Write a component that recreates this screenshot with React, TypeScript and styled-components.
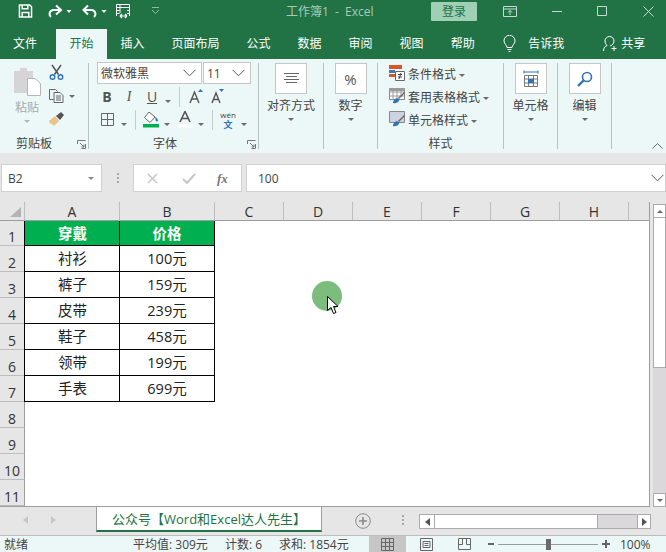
import React from "react";
import styled, { createGlobalStyle } from "styled-components";

const Global = createGlobalStyle`
  html, body { margin: 0; padding: 0; background: #e6e6e6; overflow: hidden; }
  body { font-family: "Open Sans", "Noto Sans CJK SC", sans-serif; }
  svg { display: block; flex: none; }
`;

const Window = styled.div`
  width: 666px;
  height: 552px;
  display: flex;
  flex-direction: column;
  position: relative;
  overflow: hidden;
  color: #444;
`;

/* title bar */
const TitleBar = styled.div`
  height: 29px;
  box-sizing: border-box;
  padding-bottom: 7px;
  background: #217346;
  display: flex;
  align-items: center;
  flex: none;
`;
const QuickIcon = styled.span<{ $ml: number }>`
  margin-left: ${(p) => p.$ml}px;
  display: block;
`;
const DocTitle = styled.div`
  margin-left: 126px;
  width: 145px;
  font-size: 12px;
  word-spacing: 3px;
  color: #a5cbb6;
  white-space: nowrap;
`;
const Login = styled.div`
  width: 46px;
  height: 19px;
  background: #9fcfb4;
  color: #217346;
  border-radius: 1px;
  font-size: 12px;
  line-height: 19px;
  text-align: center;
`;

/* tabs */
const TabBar = styled.div`
  height: 30px;
  background: #217346;
  display: flex;
  flex: none;
`;
const Tab = styled.div<{ $active?: boolean }>`
  padding: 0 13.5px;
  font-size: 12px;
  line-height: 29px;
  color: ${(p) => (p.$active ? "#217346" : "#fff")};
  background: ${(p) => (p.$active ? "#ecf8f7" : "transparent")};
  white-space: nowrap;
  &:first-child { padding-left: 13px; padding-right: 19px; }
`;
const TabTail = styled.div`
  margin-left: 15px;
  display: flex;
  align-items: flex-start;
  padding-top: 6px;
  color: #fff;
  font-size: 12px;
  line-height: 17px;
  white-space: nowrap;
`;
const TailLabel = styled.span<{ $ml: number }>`
  margin-left: ${(p) => p.$ml}px;
`;

/* ribbon */
const Ribbon = styled.div`
  height: 94px;
  background: #ecf8f7;
  display: flex;
  padding-top: 4px;
  box-sizing: border-box;
  flex: none;
  position: relative;
`;
const Group = styled.div<{ $w: number }>`
  width: ${(p) => p.$w}px;
  height: 86px;
  border-right: 1px solid #b8c2c2;
  flex: none;
  display: flex;
  flex-direction: column;
  position: relative;
  box-sizing: content-box;
`;
const GroupBody = styled.div`
  height: 73px;
  flex: none;
`;
const GroupLabel = styled.div<{ $pr?: number }>`
  font-size: 12px;
  line-height: 16px;
  text-align: center;
  padding-right: ${(p) => p.$pr ?? 0}px;
  color: #444;
  white-space: nowrap;
`;
const Launcher = styled.span`
  position: absolute;
  right: 2px;
  bottom: 0;
`;
const Caret = styled.span<{ $c?: string; $up?: boolean }>`
  display: inline-block;
  width: 0;
  height: 0;
  flex: none;
  border-left: 3px solid transparent;
  border-right: 3px solid transparent;
  border-top: ${(p) => (p.$up ? "0" : `3px solid ${p.$c ?? "#6a6a6a"}`)};
  border-bottom: ${(p) => (p.$up ? `3px solid ${p.$c ?? "#6a6a6a"}` : "0")};
`;
const BigButton = styled.div`
  display: flex;
  flex-direction: column;
  align-items: center;
  font-size: 12px;
  line-height: 16px;
  color: #444;
  white-space: nowrap;
`;
const BigBox = styled.div`
  width: 30px;
  height: 29px;
  background: #fff;
  border: 1px solid #c6c6c6;
  display: flex;
  align-items: center;
  justify-content: center;
  margin-bottom: 4px;
  font-size: 15px;
  color: #555;
`;
const BigCaret = styled.div`
  margin-top: 1px;
  height: 8px;
  display: flex;
  align-items: center;
`;

const ClipBody = styled.div`
  display: flex;
  height: 73px;
  padding-left: 13px;
  flex: none;
`;
const PasteCol = styled.div`
  width: 28px;
  display: flex;
  flex-direction: column;
  align-items: center;
  padding-top: 4px;
  font-size: 12px;
  line-height: 16px;
  color: #a8a8a8;
  white-space: nowrap;
`;
const PasteLabel = styled.span`
  margin-top: 4px;
  width: 24px;
`;
const ClipTools = styled.div`
  margin-left: 8px;
  padding-top: 1px;
  display: flex;
  flex-direction: column;
  gap: 9px;
`;
const ClipTool = styled.div`
  display: flex;
  align-items: center;
  gap: 5px;
`;

const FontBody = styled.div`
  height: 74px;
  margin-top: -1px;
  padding-left: 8px;
  display: flex;
  flex-direction: column;
  flex: none;
`;
const FontPickers = styled.div`
  display: flex;
  gap: 1px;
  margin-bottom: 1px;
`;
const Picker = styled.div<{ $w: number }>`
  width: ${(p) => p.$w}px;
  height: 22px;
  box-sizing: border-box;
  background: #fff;
  border: 1px solid #c6c6c6;
  display: flex;
  align-items: center;
  justify-content: space-between;
  padding: 0 5px 0 3px;
  font-size: 12px;
  color: #444;
  white-space: nowrap;
`;
const ToolRow = styled.div`
  height: 23px;
  display: flex;
  align-items: center;
`;
const ToolGlyph = styled.span<{ $w: number; $serif?: boolean; $italic?: boolean; $bold?: boolean; $under?: boolean }>`
  width: ${(p) => p.$w}px;
  text-align: center;
  font-size: 14px;
  font-family: ${(p) => (p.$serif ? '"Liberation Serif", serif' : '"Open Sans", sans-serif')};
  font-style: ${(p) => (p.$italic ? "italic" : "normal")};
  font-weight: ${(p) => (p.$bold ? 700 : 400)};
  text-decoration: ${(p) => (p.$under ? "underline" : "none")};
  color: #555;
  flex: none;
`;
const RowSep = styled.span<{ $ml: number; $mr: number }>`
  width: 1px;
  height: 20px;
  background: #c4cccc;
  margin: 0 ${(p) => p.$mr}px 0 ${(p) => p.$ml}px;
  flex: none;
`;
const Slot = styled.span<{ $ml: number }>`
  margin-left: ${(p) => p.$ml}px;
  display: block;
  flex: none;
`;
const Wen = styled.span`
  width: 18px;
  display: flex;
  flex-direction: column;
  align-items: center;
  color: #444;
  flex: none;
  margin-left: 6px;
  span { font-size: 8px; line-height: 10px; }
  b { color: #2f74b5; font-weight: 700; font-size: 9px; line-height: 10px; }
`;

const StyleBody = styled.div`
  height: 73px;
  padding: 2px 0 0 11px;
  box-sizing: border-box;
  display: flex;
  flex-direction: column;
  gap: 5px;
  flex: none;
`;
const StyleRow = styled.div`
  height: 16px;
  padding-top: 2px;
  display: flex;
  align-items: center;
  font-size: 12px;
  line-height: 16px;
  color: #444;
  white-space: nowrap;
  svg { margin: -4px 3px 0 0; }
  ${Caret} { margin-left: 3px; border-top-color: #6a6a6a; }
`;
const Collapse = styled.span`
  position: absolute;
  right: 3px;
  bottom: 4px;
`;

/* formula bar */
const FormulaBar = styled.div`
  height: 28px;
  margin-top: 11px;
  display: flex;
  flex: none;
  padding-left: 1px;
`;
const Field = styled.div<{ $w: number }>`
  width: ${(p) => p.$w}px;
  height: 28px;
  box-sizing: border-box;
  background: #fff;
  border: 1px solid #d0d0d0;
  display: flex;
  align-items: center;
  font-size: 12px;
  color: #444;
  flex: none;
`;
const FieldText = styled.span<{ $ml: number; $w: number }>`
  margin-left: ${(p) => p.$ml}px;
  width: ${(p) => p.$w}px;
  flex: none;
`;
const FxMark = styled.span`
  font-family: "Liberation Serif", serif;
  font-style: italic;
  font-weight: 700;
  font-size: 13px;
  color: #777;
`;
const Dots = styled.span`
  width: 31px;
  display: flex;
  flex-direction: column;
  align-items: center;
  justify-content: center;
  gap: 2px;
  flex: none;
  i { width: 2px; height: 2px; background: #a8a8a8; display: block; }
`;

/* sheet */
const SheetArea = styled.div`
  margin-top: 10px;
  height: 305px;
  display: flex;
  flex: none;
`;
const SheetMain = styled.div`
  width: 650px;
  display: grid;
  grid-template-columns: 25px 95px 95px repeat(6, 69px) 20px;
  grid-template-rows: 19px 25px repeat(10, 26px);
  border-right: 1px solid #9d9d9d;
  border-bottom: 1px solid #9d9d9d;
  box-sizing: border-box;
  height: 305px;
  background: #fff;
`;
const Corner = styled.div`
  background: #e6e6e6;
  border-right: 1px solid #bdbdbd;
  border-bottom: 1px solid #9d9d9d;
  box-sizing: border-box;
  padding: 5px 0 0 10px;
`;
const ColHead = styled.div<{ $end?: boolean }>`
  background: #e6e6e6;
  border-right: ${(p) => (p.$end ? "0" : "1px solid #bdbdbd")};
  border-bottom: 1px solid #9d9d9d;
  box-sizing: border-box;
  font-size: 14px;
  line-height: 20px;
  text-align: center;
  color: #333;
`;
const RowHead = styled.div<{ $row: number }>`
  grid-column: 1;
  grid-row: ${(p) => p.$row};
  background: #e6e6e6;
  border-right: 1px solid #9d9d9d;
  border-bottom: 1px solid #bdbdbd;
  box-sizing: border-box;
  font-size: 14px;
  line-height: 16px;
  display: flex;
  align-items: flex-end;
  justify-content: center;
  color: #333;
`;
const Cell = styled.div<{ $head?: boolean; $col: number; $row: number }>`
  grid-column: ${(p) => p.$col};
  grid-row: ${(p) => p.$row};
  box-sizing: border-box;
  margin-left: -1px;
  border-style: solid;
  border-color: #000;
  border-width: 0 ${(p) => (p.$col === 3 ? "1px" : "0")} 1px 1px;
  background: ${(p) => (p.$head ? "#00b050" : "#fff")};
  color: ${(p) => (p.$head ? "#fff" : "#222")};
  font-size: 14.500px;
  font-weight: ${(p) => (p.$head ? 700 : 400)};
  line-height: 25px;
  text-align: center;
  white-space: nowrap;
  position: relative;
`;
const Pointer = styled.div`
  position: absolute;
  left: 312px;
  top: 281px;
  width: 30px;
  height: 30px;
  border-radius: 50%;
  background: #7cbc7c;
`;
const Arrow = styled.span`
  position: absolute;
  left: 327px;
  top: 296px;
`;

const VScroll = styled.div`
  width: 13px;
  margin-left: 3px;
  height: 305px;
  display: flex;
  flex-direction: column;
  padding-top: 2px;
  box-sizing: border-box;
  flex: none;
`;
const ScrollBtn = styled.div<{ $w?: number; $h?: number }>`
  width: ${(p) => p.$w ?? 13}px;
  height: ${(p) => p.$h ?? 14}px;
  box-sizing: border-box;
  background: #fff;
  border: 1px solid #ababab;
  display: flex;
  align-items: center;
  justify-content: center;
  flex: none;
`;
const VThumb = styled.div`
  height: 150px;
  box-sizing: border-box;
  background: #fff;
  border: 1px solid #ababab;
  border-top: 0;
  flex: none;
`;
const VTrack = styled.div`
  flex: 1;
  background: #dad8da;
`;

/* sheet tabs */
const SheetBar = styled.div`
  height: 28px;
  display: flex;
  flex: none;
  background: #e6e6e6;
  border-bottom: 1px solid #bdbdbd;
  box-sizing: content-box;
`;
const NavArrows = styled.div`
  width: 96px;
  display: flex;
  align-items: center;
  gap: 23px;
  padding: 0 0 2px 23px;
  box-sizing: border-box;
  flex: none;
`;
const SheetTab = styled.div`
  width: 226px;
  height: 25px;
  box-sizing: border-box;
  background: #fff;
  border-left: 1px solid #9d9d9d;
  border-right: 1px solid #9d9d9d;
  border-bottom: 2px solid #217346;
  color: #217346;
  font-size: 13px;
  line-height: 24px;
  text-align: center;
  white-space: nowrap;
  flex: none;
`;
const AddSheet = styled.div`
  margin-left: 33px;
  padding-top: 6px;
  flex: none;
`;
const TabDots = styled(Dots)`
  width: 10px;
  margin-left: 27px;
  height: 26px;
`;
const HScroll = styled.div`
  margin: 7px 0 0 11px;
  width: 232px;
  height: 15px;
  display: flex;
  flex: none;
`;
const HThumb = styled.div`
  width: 163px;
  box-sizing: border-box;
  background: #fff;
  border: 1px solid #ababab;
  border-left: 0;
`;
const HTrack = styled.div`
  flex: 1;
  background: #dad8da;
  border-top: 1px solid #ababab;
  border-bottom: 1px solid #ababab;
`;

/* status bar */
const StatusBar = styled.div`
  height: 16px;
  flex: none;
  background: #ecf8f7;
  display: flex;
  align-items: center;
  font-size: 12px;
  line-height: 16px;
  color: #444;
  white-space: nowrap;
`;
const StatusText = styled.span<{ $w: number; $pl?: number }>`
  width: ${(p) => p.$w}px;
  padding: 1px 0 0 ${(p) => p.$pl ?? 0}px;
  box-sizing: border-box;
  flex: none;
`;
const ViewBtn = styled.span<{ $active?: boolean; $w: number }>`
  width: ${(p) => p.$w}px;
  height: 100%;
  background: ${(p) => (p.$active ? "#c6c6c6" : "transparent")};
  display: flex;
  align-items: center;
  justify-content: center;
  flex: none;
`;
const ZoomTrack = styled.div`
  width: 100px;
  height: 1px;
  background: #9a9a9a;
  margin: 0 4px 0 4px;
  display: flex;
  align-items: center;
  justify-content: center;
  flex: none;
  i { width: 5px; height: 11px; background: #6a6a6a; display: block; flex: none; }
`;
const ZoomLabel = styled.span`
  margin-left: 10px;
  padding-top: 1px;
`;

const Launch = () => (
  <svg width="9" height="9" viewBox="0 0 9 9" fill="none" stroke="#777">
    <path d="M.5 4V.5H8.500M8.500 4v4.500H4.500M3 3l4 4M7 4.500V7H4.500" />
  </svg>
);

const Chevron = () => (
  <svg width="13" height="8" viewBox="0 0 13 8" fill="none" stroke="#555">
    <path d="M.5.800 6.500 6.800 12.500.8" />
  </svg>
);

const rows = [
  ["衬衫", "100元"],
  ["裤子", "159元"],
  ["皮带", "239元"],
  ["鞋子", "458元"],
  ["领带", "199元"],
  ["手表", "699元"],
];

export default function App() {
  return (
    <Window>
      <Global />
      <TitleBar>
        <QuickIcon $ml={18}>
          <svg width="15" height="14" viewBox="0 0 15 15" fill="none" stroke="#fff" strokeWidth="1.600">
            <path d="M1 1h11l2 2v11H1zM4 1v4h6V1M4 14V9h7v5" />
          </svg>
        </QuickIcon>
        <QuickIcon $ml={14}>
          <svg width="26" height="14" viewBox="0 0 26 14" fill="none" stroke="#fff" strokeWidth="2">
            <path d="M13 6H6a4 4 0 0 0-2 7M9 1.500 14 6l-5 4.500" />
            <path d="M19.500 6h5l-2.500 3z" fill="#fff" stroke="none" />
          </svg>
        </QuickIcon>
        <QuickIcon $ml={9}>
          <svg width="26" height="14" viewBox="0 0 26 14" fill="none" stroke="#fff" strokeWidth="2">
            <path d="M2 6h8a4 4 0 0 1 2 7M6 1.500 1.500 6 6 10.500" />
            <path d="M19.500 6h5l-2.500 3z" fill="#fff" stroke="none" />
          </svg>
        </QuickIcon>
        <QuickIcon $ml={7}>
          <svg width="17" height="16" viewBox="0 0 17 16" fill="none" stroke="#fff">
            <path d="M1.500 13V1.500h13V13M1.500 4.500h13M5 1.500V10M1.500 7.500h3M1.500 10.500h3M12 7.500h2.500M12 10.500h2.500" />
            <path d="M5 13h7M5 13l2-2M5 13l2 2M12 13l-2-2M12 13l-2 2" strokeWidth="1.200" />
          </svg>
        </QuickIcon>
        <QuickIcon $ml={19}>
          <svg width="9" height="8" viewBox="0 0 9 8" fill="none" stroke="#8fbda4">
            <path d="M1 .5h7M1 3l3.500 3.500L8 3" />
          </svg>
        </QuickIcon>
        <DocTitle>工作簿1 - Excel</DocTitle>
        <Login>登录</Login>
        <QuickIcon $ml={26}>
          <svg width="14" height="11" viewBox="0 0 14 11" fill="none" stroke="#c3dccf">
            <path d="M.5.500h13v10H.500zM.5 3h13M7 9V4.500M5 6.500l2-2 2 2" />
          </svg>
        </QuickIcon>
        <QuickIcon $ml={35}>
          <svg width="10" height="1" viewBox="0 0 10 1"><path d="M0 .5h10" stroke="#c3dccf" /></svg>
        </QuickIcon>
        <QuickIcon $ml={35}>
          <svg width="10" height="10" viewBox="0 0 10 10" fill="none"><path d="M.5.500h9v9h-9z" stroke="#c3dccf" /></svg>
        </QuickIcon>
        <QuickIcon $ml={36}>
          <svg width="11" height="11" viewBox="0 0 11 11" fill="none"><path d="M.5.500l10 10M10.500.500l-10 10" stroke="#c3dccf" /></svg>
        </QuickIcon>
      </TitleBar>

      <TabBar>
        <Tab>文件</Tab>
        <Tab $active>开始</Tab>
        <Tab>插入</Tab>
        <Tab>页面布局</Tab>
        <Tab>公式</Tab>
        <Tab>数据</Tab>
        <Tab>审阅</Tab>
        <Tab>视图</Tab>
        <Tab>帮助</Tab>
        <TabTail>
          <svg width="13" height="17" viewBox="0 0 13 17" fill="none" stroke="#fff">
            <path d="M4 12.500C4 10 1 9 1 5.800a5.500 5.500 0 0 1 11 0C12 9 9 10 9 12.500zM4.500 14.500h4M5.500 16.500h2" />
          </svg>
          <TailLabel $ml={12}>告诉我</TailLabel>
          <TailLabel $ml={39}>
            <svg width="15" height="17" viewBox="0 0 15 17" fill="none" stroke="#fff">
              <path d="M.5 16c0-3.500 2-5 3.500-5.500C2.500 9 2 7.500 2 6a4.500 4.500 0 0 1 9 0c0 2-1.500 4.500-4 5M11 11v5M8.500 13.500h5" />
            </svg>
          </TailLabel>
          <TailLabel $ml={3}>共享</TailLabel>
        </TabTail>
      </TabBar>

      <Ribbon>
        <Group $w={88}>
          <ClipBody>
            <PasteCol>
              <svg width="28" height="29" viewBox="0 0 28 29">
                <path d="M1 4h6V1h7v3h6v22H1z" fill="#d6d4d6" />
                <path d="M14.500 11.500H22l5.500 5v12h-13z" fill="#fff" stroke="#b5b5b5" />
              </svg>
              <PasteLabel>粘贴</PasteLabel>
              <BigCaret><Caret $c="#b5b5b5" /></BigCaret>
            </PasteCol>
            <ClipTools>
              <ClipTool>
                <svg width="15" height="16" viewBox="0 0 15 16" fill="none">
                  <path d="M3 1l6.500 9.500M12 1 5.500 10.500" stroke="#555" strokeWidth="1.500" />
                  <circle cx="3.500" cy="13" r="2.300" stroke="#2f74b5" strokeWidth="1.400" />
                  <circle cx="11.500" cy="13" r="2.300" stroke="#2f74b5" strokeWidth="1.400" />
                </svg>
              </ClipTool>
              <ClipTool>
                <svg width="15" height="14" viewBox="0 0 15 14" fill="none" stroke="#666">
                  <path d="M4.500 10.500h-4V.500h6l2 2v1M5 3.500h6l3 3v7H5zM7 7h5M7 9h5M7 11h5" />
                </svg>
                <Caret />
              </ClipTool>
              <ClipTool>
                <svg width="16" height="14" viewBox="0 0 16 14">
                  <path d="M0 9l6-5 4 5-5 5-1-2-1 1-1-2-1 1z" fill="#e8c48a" />
                  <path d="M7 4l5-4 3 3-4 5z" fill="#555" />
                </svg>
              </ClipTool>
            </ClipTools>
          </ClipBody>
          <GroupLabel $pr={20}>剪贴板</GroupLabel>
          <Launcher><Launch /></Launcher>
        </Group>

        <Group $w={169}>
          <FontBody>
            <FontPickers>
              <Picker $w={105}>微软雅黑<Chevron /></Picker>
              <Picker $w={48}>11<Chevron /></Picker>
            </FontPickers>
            <ToolRow>
              <ToolGlyph $w={20} $bold>B</ToolGlyph>
              <ToolGlyph $w={24} $italic $serif>I</ToolGlyph>
              <ToolGlyph $w={22} $under>U</ToolGlyph>
              <Slot $ml={2}><Caret /></Slot>
              <RowSep $ml={8} $mr={9} />
              <svg width="14" height="15" viewBox="0 0 14 15">
                <path d="M1 14 5.500 3 10 14M2.800 10h5.400" fill="none" stroke="#555" strokeWidth="1.400" />
                <path d="M9 3l2.500-3L14 3z" fill="#2f74b5" />
              </svg>
              <Slot $ml={8}>
                <svg width="14" height="15" viewBox="0 0 14 15">
                  <path d="M1 14 5 4l4 10M2.500 10.500h5" fill="none" stroke="#555" strokeWidth="1.400" />
                  <path d="M8 0h5l-2.500 3z" fill="#2f74b5" />
                </svg>
              </Slot>
            </ToolRow>
            <ToolRow>
              <Slot $ml={4}>
                <svg width="13" height="13" viewBox="0 0 13 13" fill="none" stroke="#666">
                  <path d="M.5.500h12v12H.500zM6.500.500v12M.5 6.500h12" />
                </svg>
              </Slot>
              <Slot $ml={7}><Caret /></Slot>
              <RowSep $ml={8} $mr={7} />
              <svg width="16" height="17" viewBox="0 0 16 17">
                <path d="M6 1 1.500 6.500 7 11.500 12 6z" fill="#fff" stroke="#666" />
                <path d="M12 6c2 1 3 2.500 3 4l-2 .5z" fill="#2f74b5" />
                <path d="M0 13h16v3.500H0z" fill="#00b050" />
              </svg>
              <Slot $ml={5}><Caret /></Slot>
              <Slot $ml={7}>
                <svg width="16" height="17" viewBox="0 0 16 17">
                  <path d="M3 11 8 .5 13 11M4.800 7.500h6.400" fill="none" stroke="#555" strokeWidth="1.600" />
                  <path d="M0 13h16v3.500H0z" fill="#fff" />
                </svg>
              </Slot>
              <Slot $ml={5}><Caret /></Slot>
              <RowSep $ml={8} $mr={0} />
              <Wen><span>wén</span><b>文</b></Wen>
              <Slot $ml={4}><Caret /></Slot>
            </ToolRow>
          </FontBody>
          <GroupLabel $pr={17}>字体</GroupLabel>
          <Launcher><Launch /></Launcher>
        </Group>

        <Group $w={64}>
          <GroupBody>
            <BigButton>
              <BigBox>
                <svg width="15" height="11" viewBox="0 0 15 11" fill="none" stroke="#666">
                  <path d="M0 .5h15M2 3.500h11M0 6.500h15M2 9.500h11" />
                </svg>
              </BigBox>
              对齐方式
              <BigCaret><Caret /></BigCaret>
            </BigButton>
          </GroupBody>
        </Group>

        <Group $w={53}>
          <GroupBody>
            <BigButton>
              <BigBox>%</BigBox>
              数字
              <BigCaret><Caret /></BigCaret>
            </BigButton>
          </GroupBody>
        </Group>

        <Group $w={125}>
          <StyleBody>
            <StyleRow>
              <svg width="16" height="16" viewBox="0 0 16 16">
                <path d="M0 0h13v4H0z" fill="#d9562b" />
                <path d="M0 5h6v3H0z" fill="#3c78b8" />
                <path d="M0 9h6v3H0z" fill="#d9562b" />
                <path d="M6.500 6.500h9v9h-9z" fill="#fff" stroke="#666" />
                <path d="M9 9.500h4M9 12h4M10 14l2-6" stroke="#444" fill="none" />
              </svg>
              条件格式<Caret />
            </StyleRow>
            <StyleRow>
              <svg width="16" height="16" viewBox="0 0 16 16">
                <path d="M.5.500h15v11H.500z" fill="#fff" stroke="#888" />
                <path d="M.5 4h15M.5 8h15M4 .5v11M8 .5v11M12 .5v8" stroke="#999" fill="none" />
                <path d="M0 0h16v3H0z" fill="#9b9b9b" />
                <path d="M9 10l6-6 1 1-6 6z" fill="#666" />
                <path d="M4 15c0-3 3-6 6-4 1 2-2 5-6 4z" fill="#2f74b5" />
              </svg>
              套用表格格式<Caret />
            </StyleRow>
            <StyleRow>
              <svg width="16" height="16" viewBox="0 0 16 16">
                <path d="M.5.500h15v11H.500z" fill="#cfd2e0" stroke="#888" />
                <path d="M9 10l6-6 1 1-6 6z" fill="#666" />
                <path d="M4 15c0-3 3-6 6-4 1 2-2 5-6 4z" fill="#2f74b5" />
              </svg>
              单元格样式<Caret />
            </StyleRow>
          </StyleBody>
          <GroupLabel>样式</GroupLabel>
        </Group>

        <Group $w={53}>
          <GroupBody>
            <BigButton>
              <BigBox>
                <svg width="16" height="18" viewBox="0 0 16 18" fill="none" stroke="#777">
                  <path d="M1 .5v3M15 .5v3M1 2h14" stroke="#2f74b5" />
                  <path d="M1.500 5.500h13v11h-13zM1.500 9h13M1.500 13h13M5.500 5.500v11M10.500 5.500v11" />
                  <path d="M5 9h6v4H5z" fill="#2f74b5" stroke="none" />
                </svg>
              </BigBox>
              单元格
              <BigCaret><Caret /></BigCaret>
            </BigButton>
          </GroupBody>
        </Group>

        <Group $w={53}>
          <GroupBody>
            <BigButton>
              <BigBox>
                <svg width="16" height="16" viewBox="0 0 16 16" fill="none" stroke="#2f74b5" strokeWidth="1.600">
                  <circle cx="10" cy="6" r="4.500" />
                  <path d="M6.500 9.500 1 15" strokeWidth="2.400" />
                </svg>
              </BigBox>
              编辑
              <BigCaret><Caret /></BigCaret>
            </BigButton>
          </GroupBody>
        </Group>

        <Collapse>
          <svg width="11" height="6" viewBox="0 0 11 6" fill="none" stroke="#666"><path d="M.5 5.500l5-5 5 5" /></svg>
        </Collapse>
      </Ribbon>

      <FormulaBar>
        <Field $w={101}>
          <FieldText $ml={6} $w={80}>B2</FieldText>
          <Caret $c="#888" />
        </Field>
        <Dots><i /><i /><i /></Dots>
        <Field $w={109}>
          <Slot $ml={13}>
            <svg width="11" height="11" viewBox="0 0 11 11" fill="none" stroke="#c6c6c6" strokeWidth="1.500"><path d="M1 1l9 9M10 1l-9 9" /></svg>
          </Slot>
          <Slot $ml={24}>
            <svg width="14" height="11" viewBox="0 0 14 11" fill="none" stroke="#c6c6c6" strokeWidth="2"><path d="M1 6l4 4 8-9" /></svg>
          </Slot>
          <Slot $ml={21}><FxMark>fx</FxMark></Slot>
        </Field>
        <Slot $ml={4} />
        <Field $w={420}>
          <FieldText $ml={11} $w={393}>100</FieldText>
          <Chevron />
        </Field>
      </FormulaBar>

      <SheetArea>
        <SheetMain>
          <Corner>
            <svg width="11" height="10" viewBox="0 0 11 10"><path d="M11 0v10H0z" fill="#b4b4b4" /></svg>
          </Corner>
          {["A", "B", "C", "D", "E", "F", "G", "H"].map((c) => (
            <ColHead key={c}>{c}</ColHead>
          ))}
          <ColHead $end />
          {Array.from({ length: 11 }, (_, i) => (
            <RowHead key={i} $row={i + 2}>{i + 1}</RowHead>
          ))}
          <Cell $col={2} $row={2} $head>穿戴</Cell>
          <Cell $col={3} $row={2} $head>价格</Cell>
          {rows.map(([name, price], i) => (
            <React.Fragment key={name}>
              <Cell $col={2} $row={i + 3}>{name}</Cell>
              <Cell $col={3} $row={i + 3}>{price}</Cell>
            </React.Fragment>
          ))}
        </SheetMain>
        <VScroll>
          <ScrollBtn><Caret $up /></ScrollBtn>
          <VThumb />
          <VTrack />
          <ScrollBtn><Caret /></ScrollBtn>
        </VScroll>
      </SheetArea>

      <SheetBar>
        <NavArrows>
          <svg width="5" height="8" viewBox="0 0 5 8"><path d="M5 0v8L0 4z" fill="#c6c6c6" /></svg>
          <svg width="5" height="8" viewBox="0 0 5 8"><path d="M0 0v8l5-4z" fill="#c6c6c6" /></svg>
        </NavArrows>
        <SheetTab>公众号【Word和Excel达人先生】</SheetTab>
        <AddSheet>
          <svg width="16" height="16" viewBox="0 0 16 16" fill="none" stroke="#8a8a8a">
            <circle cx="8" cy="8" r="7.300" />
            <path d="M8 4v8M4 8h8" strokeWidth="1.600" />
          </svg>
        </AddSheet>
        <TabDots><i /><i /><i /></TabDots>
        <HScroll>
          <ScrollBtn $w={16} $h={15}>
            <svg width="5" height="8" viewBox="0 0 5 8"><path d="M5 0v8L0 4z" fill="#555" /></svg>
          </ScrollBtn>
          <HThumb />
          <HTrack />
          <ScrollBtn $w={14} $h={15}>
            <svg width="5" height="8" viewBox="0 0 5 8"><path d="M0 0v8l5-4z" fill="#555" /></svg>
          </ScrollBtn>
        </HScroll>
      </SheetBar>

      <StatusBar>
        <StatusText $w={133} $pl={4}>就绪</StatusText>
        <StatusText $w={92}>平均值: 309元</StatusText>
        <StatusText $w={54}>计数: 6</StatusText>
        <StatusText $w={90}>求和: 1854元</StatusText>
        <ViewBtn $w={37} $active>
          <svg width="13" height="13" viewBox="0 0 13 13" fill="none" stroke="#666">
            <path d="M.5.500h12v12H.500zM4.500.500v12M8.500.500v12M.5 4.500h12M.5 8.500h12" />
          </svg>
        </ViewBtn>
        <ViewBtn $w={40}>
          <svg width="13" height="13" viewBox="0 0 13 13" fill="none" stroke="#666">
            <path d="M.5.500h12v12H.500zM3 3.500h7v6H3zM4.500 5.500h4M4.500 7.500h4" />
          </svg>
        </ViewBtn>
        <ViewBtn $w={37}>
          <svg width="13" height="12" viewBox="0 0 13 12" fill="none" stroke="#666">
            <path d="M.5.500h12v11H.500zM.5 6.500h4V.500M12.500 6.500h-4V.500" />
          </svg>
        </ViewBtn>
        <Slot $ml={5}><svg width="6" height="2" viewBox="0 0 6 2"><path d="M0 1h6" stroke="#666" strokeWidth="2" /></svg></Slot>
        <ZoomTrack><i /></ZoomTrack>
        <svg width="8" height="8" viewBox="0 0 8 8"><path d="M0 4h8M4 0v8" stroke="#666" strokeWidth="2" /></svg>
        <ZoomLabel>100%</ZoomLabel>
      </StatusBar>

      <Pointer />
      <Arrow>
        <svg width="13" height="19" viewBox="0 0 13 19">
          <path d="M.5.500v14l3.500-3 2.500 6 2.500-1-2.500-6h4.500z" fill="#fff" stroke="#000" />
        </svg>
      </Arrow>
    </Window>
  );
}
